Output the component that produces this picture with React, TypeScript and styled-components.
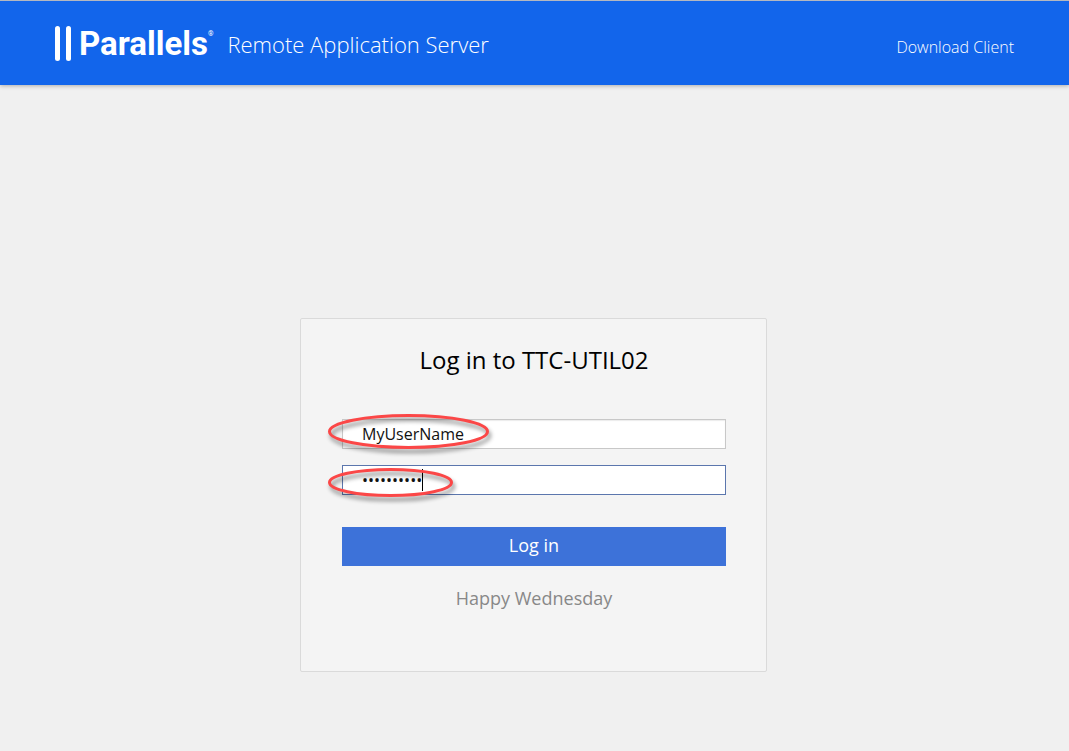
import React from "react";
import styled, { createGlobalStyle } from "styled-components";

const GlobalStyle = createGlobalStyle`
  *, *::before, *::after { box-sizing: border-box; }
  body {
    margin: 0;
    background: #f0f0f0;
    color: #111;
    font-family: "Open Sans", "Liberation Sans", sans-serif;
  }
`;

const Page = styled.div`
  display: flex;
  flex-direction: column;
  min-height: 100vh;
`;

const Header = styled.header`
  display: flex;
  align-items: center;
  justify-content: space-between;
  min-height: 85px;
  padding: 0 55px;
  border-top: 1px solid #b4b8c0;
  background: #1265eb;
  color: #fff;
  box-shadow: 0 1px 4px rgba(0, 0, 0, 0.28);
`;

const Brand = styled.div`
  display: flex;
  align-items: center;
  gap: 14px;
`;

const Logo = styled.div`
  display: flex;
  align-items: center;
  gap: 6px;
  padding-top: 2px;
`;

const Wordmark = styled.span`
  display: flex;
  align-items: flex-start;
  font-family: Roboto, sans-serif;
  font-size: 33px;
  font-weight: 700;
  line-height: 36px;
`;

const Registered = styled.sup`
  font-size: 7px;
  font-weight: 400;
  line-height: 16px;
`;

const Product = styled.span`
  font-size: 22px;
  font-weight: 300;
  line-height: 36px;
  padding-top: 2px;
`;

const HeaderLink = styled.a`
  padding-top: 8px;
  color: #fff;
  font-size: 16px;
  font-weight: 300;
  line-height: 24px;
  text-decoration: none;
`;

const Main = styled.main`
  display: flex;
  justify-content: center;
  padding: 233px 18px 79px 16px;
`;

const Card = styled.form`
  display: flex;
  flex-direction: column;
  width: 100%;
  max-width: 467px;
  padding: 23px 40px 61px 41px;
  border: 1px solid #dadada;
  border-radius: 2px;
  background: #f4f4f4;
`;

const Title = styled.h1`
  margin: 0 0 41px;
  color: #000;
  font-size: 24px;
  font-weight: 400;
  line-height: 36px;
  text-align: center;
`;

const Field = styled.div`
  position: relative;
  margin-bottom: 16px;
`;

const Input = styled.input<{ $active?: boolean }>`
  display: block;
  width: 100%;
  height: 30px;
  padding: 0 19px;
  border: 1px solid ${(p) => (p.$active ? "#5b76ad" : "#c8c8c8")};
  border-radius: 0;
  outline: none;
  background: #fff;
  box-shadow: ${(p) => (p.$active ? "none" : "inset 0 1px 1px rgba(0, 0, 0, 0.08)")};
  color: #111;
  font-family: inherit;
  font-size: 16px;
  line-height: 28px;
`;

const Caret = styled.span`
  position: absolute;
  top: 4px;
  left: 80px;
  width: 1px;
  height: 22px;
  background: #000;
`;

const Marker = styled.svg`
  position: absolute;
  top: -10px;
  left: -18px;
  overflow: visible;
  pointer-events: none;
  filter: drop-shadow(2px 4px 2px rgba(0, 0, 0, 0.45));
`;

const Submit = styled.button`
  height: 39px;
  margin: 16px 0 20px;
  padding: 0 16px 4px;
  border: 0;
  background: #3d72d9;
  color: #fff;
  font-family: inherit;
  font-size: 18px;
  line-height: 32px;
  cursor: pointer;
`;

const Greeting = styled.p`
  margin: 0;
  color: #888;
  font-size: 18px;
  line-height: 24px;
  text-align: center;
`;

function Ring({ rx, ry, cy }: { rx: number; ry: number; cy: number }) {
  return (
    <Marker width={rx * 2 + 6} height={50} aria-hidden="true">
      <ellipse cx={rx + 5.5} cy={cy - 0.5} rx={rx} ry={ry} fill="none" stroke="#fb4747" strokeWidth="3" />
    </Marker>
  );
}

export default function App() {
  return (
    <>
      <GlobalStyle />
      <Page>
        <Header>
          <Brand>
            <Logo>
              <svg width="18" height="36" viewBox="0 0 18 36" fill="#fff" aria-hidden="true">
                <rect x="0" y="0" width="5" height="35" rx="2.5" />
                <rect x="11" y="0" width="5" height="35" rx="2.5" />
              </svg>
              <Wordmark>
                Parallels<Registered>®</Registered>
              </Wordmark>
            </Logo>
            <Product>Remote Application Server</Product>
          </Brand>
          <HeaderLink href="#download">Download Client</HeaderLink>
        </Header>
        <Main>
          <Card onSubmit={(e) => e.preventDefault()}>
            <Title>Log in to TTC-UTIL02</Title>
            <Field>
              <Input type="text" aria-label="User name" defaultValue="MyUserName" />
              <Ring rx={79} ry={16} cy={23} />
            </Field>
            <Field>
              <Input $active type="password" aria-label="Password" defaultValue="MyPassword" />
              <Caret />
              <Ring rx={61} ry={13} cy={28} />
            </Field>
            <Submit type="submit">Log in</Submit>
            <Greeting>Happy Wednesday</Greeting>
          </Card>
        </Main>
      </Page>
    </>
  );
}
